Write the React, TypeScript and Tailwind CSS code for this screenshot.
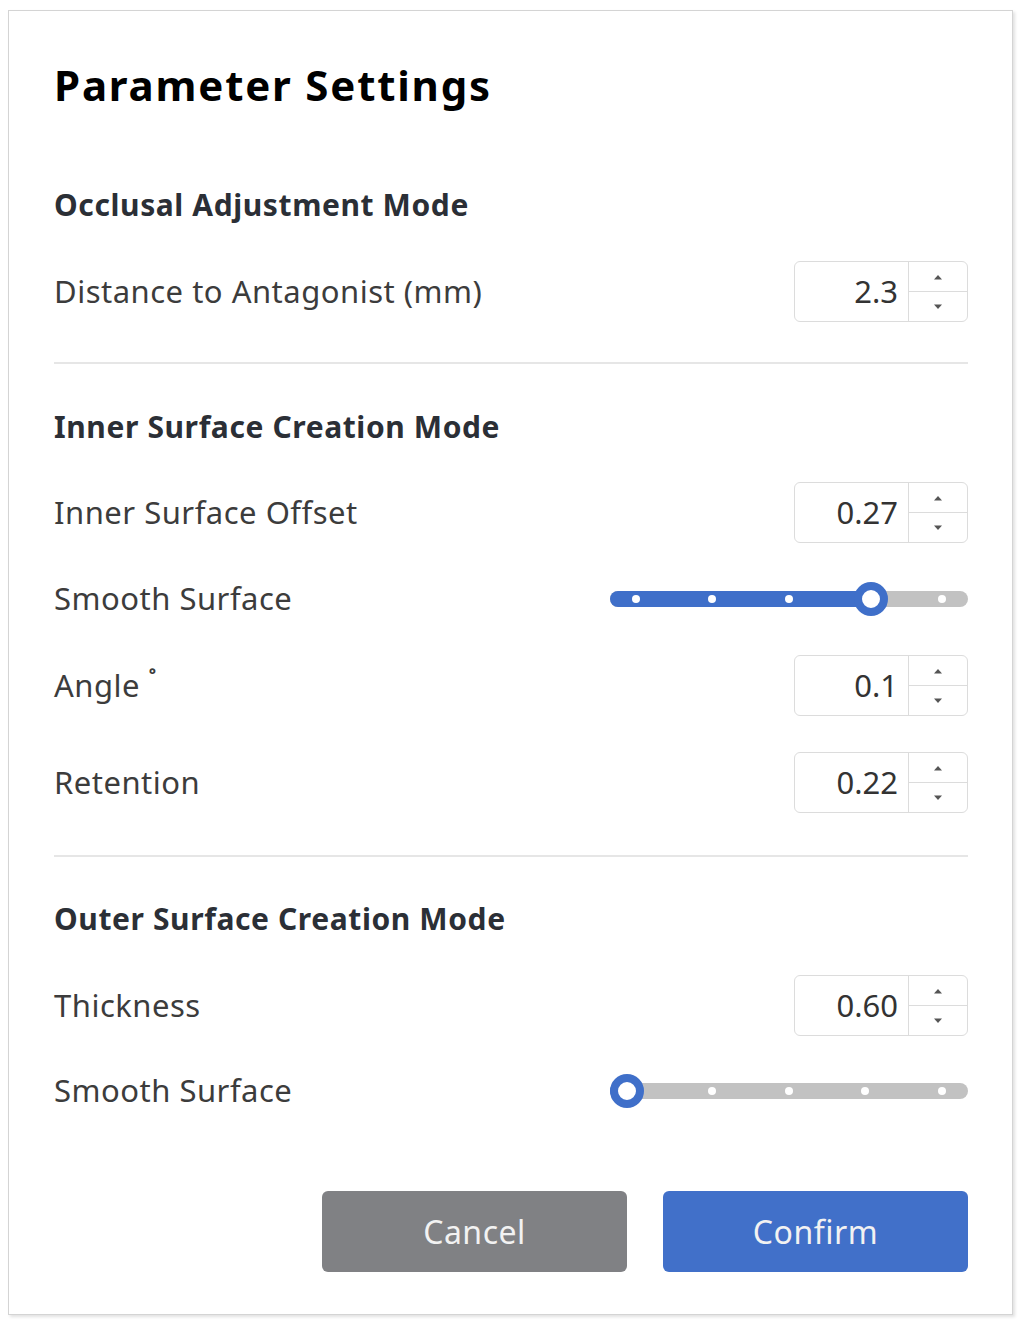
import React from "react";

const font = { fontFamily: '"Noto Sans", "Open Sans", Arial, sans-serif' };

function Spinner({ value }: { value: string }) {
  return (
    <div className="flex h-[61px] w-[174px] overflow-hidden rounded-md border border-[#dcdcdc] bg-white">
      <div className="flex flex-1 items-center justify-end pr-[10px] text-[31px] text-[#333]">
        {value}
      </div>
      <div className="flex w-[59px] flex-col border-l border-[#dcdcdc]">
        <div className="flex flex-1 items-center justify-center border-b border-[#dcdcdc]">
          <svg width="10" height="6" viewBox="0 0 10 6">
            <path d="M1 5.5 L5 1 L9 5.5 Z" fill="#555" />
          </svg>
        </div>
        <div className="flex flex-1 items-center justify-center">
          <svg width="10" height="6" viewBox="0 0 10 6">
            <path d="M1 0.5 L5 5 L9 0.5 Z" fill="#555" />
          </svg>
        </div>
      </div>
    </div>
  );
}

const dots = [26, 102, 179, 255, 332];

function Slider({ thumb }: { thumb: number }) {
  return (
    <div className="relative h-[16px] w-[358px] rounded-full bg-[#c2c2c2]">
      <div
        className="absolute left-0 top-0 h-full rounded-full bg-[#3f6fc9]"
        style={{ width: thumb }}
      />
      {dots.map((d) => (
        <div
          key={d}
          className="absolute top-1/2 h-[8px] w-[8px] -translate-x-1/2 -translate-y-1/2 rounded-full bg-white"
          style={{ left: d }}
        />
      ))}
      <div
        className="absolute top-1/2 h-[34px] w-[34px] -translate-x-1/2 -translate-y-1/2 rounded-full border-[8px] border-[#3f6fc9] bg-white"
        style={{ left: thumb }}
      />
    </div>
  );
}

function Row({ label, children, className }: { label: React.ReactNode; children: React.ReactNode; className: string }) {
  return (
    <div className={`flex h-[61px] items-center justify-between ${className}`}>
      <span className="text-[31px] tracking-[0.5px] text-[#3c3c3c]">{label}</span>
      {children}
    </div>
  );
}

function Heading({ children, className }: { children: React.ReactNode; className: string }) {
  return (
    <h2 className={`h-[36px] text-[30px] font-bold leading-[36px] tracking-[0.6px] text-[#2b2f36] ${className}`}>
      {children}
    </h2>
  );
}

export default function App() {
  return (
    <div className="min-h-[1326px] bg-white pl-[8px] pt-[10px]" style={font}>
      <div className="flex h-[1305px] w-[1005px] flex-col border border-[#d4d4d4] bg-white pl-[45px] pr-[44px] pt-[50px] shadow-[2px_2px_3px_rgba(0,0,0,0.12)]">
        <h1 className="h-[48px] text-[42px] font-bold leading-[48px] tracking-[1.8px] text-black">
          Parameter Settings
        </h1>

        {/* Occlusal */}
        <Heading className="mt-[78px]">Occlusal Adjustment Mode</Heading>
        <Row label="Distance to Antagonist (mm)" className="mt-[38px]">
          <Spinner value="2.3" />
        </Row>
        <div className="mt-[40px] h-[2px] bg-[#e6e6e6]" />

        {/* Inner */}
        <Heading className="mt-[45px]">Inner Surface Creation Mode</Heading>
        <Row label="Inner Surface Offset" className="mt-[37px]">
          <Spinner value="0.27" />
        </Row>
        <Row label="Smooth Surface" className="mt-[25px]">
          <Slider thumb={261} />
        </Row>
        <Row
          label={
            <>
              Angle <span className="relative -top-[9px] text-[24px] font-bold">˚</span>
            </>
          }
          className="mt-[26px]"
        >
          <Spinner value="0.1" />
        </Row>
        <Row label="Retention" className="mt-[36px]">
          <Spinner value="0.22" />
        </Row>
        <div className="mt-[42px] h-[2px] bg-[#e6e6e6]" />

        {/* Outer */}
        <Heading className="mt-[44px]">Outer Surface Creation Mode</Heading>
        <Row label="Thickness" className="mt-[38px]">
          <Spinner value="0.60" />
        </Row>
        <Row label="Smooth Surface" className="mt-[24px]">
          <Slider thumb={17} />
        </Row>

        <div className="mt-[70px] flex justify-end gap-[36px]">
          <button className="h-[81px] w-[305px] rounded-md bg-[#808184] text-[32px] tracking-[0.5px] text-[#f2f2f2]">
            Cancel
          </button>
          <button className="h-[81px] w-[305px] rounded-md bg-[#4170c9] text-[32px] tracking-[0.5px] text-[#f2f2f2]">
            Confirm
          </button>
        </div>
      </div>
    </div>
  );
}
